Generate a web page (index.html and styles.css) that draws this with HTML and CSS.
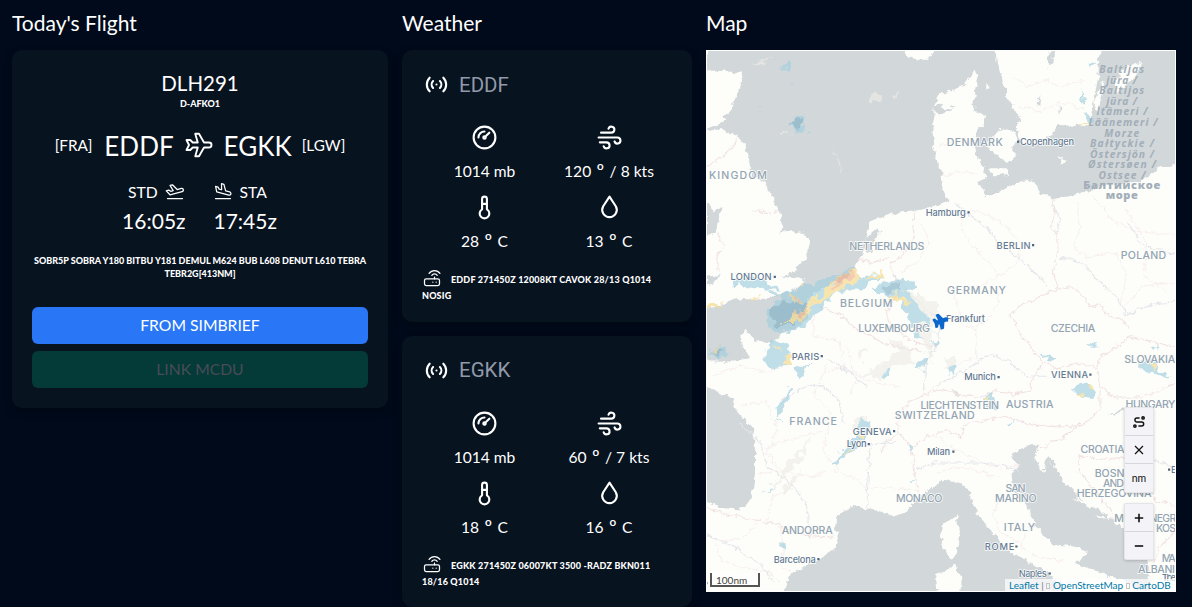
FILE: index.html
```html
<!DOCTYPE html>
<html lang="en">
<head>
<meta charset="utf-8">
<title>Today's Flight</title>
<link rel="stylesheet" href="styles.css">
</head>
<body>
<svg class="sprite" width="0" height="0">
  <symbol id="plane" viewBox="0 0 24 24"><path d="M16 10h4a2 2 0 0 1 0 4h-4l-4 7h-3l2-7h-4l-2 2h-3l2-4l-2-4h3l2 2h4l-2-7h3z"/></symbol>
  <symbol id="depart" viewBox="0 0 24 24"><path d="M14.639 10.258l4.83-1.294a2 2 0 1 1 1.035 3.863l-14.489 3.883l-4.45-5.02l2.897-.776l2.45 1.414l2.897-.776l-3.743-6.244l2.898-.777l5.675 5.727zM3 21h18"/></symbol>
  <symbol id="arrive" viewBox="0 0 24 24"><path d="M15.157 11.81l4.83 1.295a2 2 0 1 1-1.036 3.863l-14.489-3.882l-1.345-6.572l2.898.776l1.414 2.45l2.898.776l-.12-7.279l2.898.777l2.052 7.797zM3 21h18"/></symbol>
  <symbol id="signal" viewBox="0 0 24 24"><path d="M12 12v.01M14.828 9.172a4 4 0 0 1 0 5.656M17.657 6.343a8 8 0 0 1 0 11.314M9.168 14.828a4 4 0 0 1 0-5.656M6.337 17.657a8 8 0 0 1 0-11.314"/></symbol>
  <symbol id="gauge" viewBox="0 0 24 24"><circle cx="12" cy="12" r="9"/><circle cx="12" cy="12" r="1"/><path d="M13.41 10.59l2.59-2.59M7 12a5 5 0 0 1 5-5"/></symbol>
  <symbol id="wind" viewBox="0 0 24 24"><path d="M5 8h8.5a2.5 2.5 0 1 0-2.34-3.24M3 12h15.5a2.5 2.5 0 1 1-2.34 3.24M4 16h5.5a2.5 2.5 0 1 1-2.34 3.24"/></symbol>
  <symbol id="temp" viewBox="0 0 24 24"><path d="M10 13.5a4 4 0 1 0 4 0v-8.5a2 2 0 0 0-4 0v8.5M10 9h4"/></symbol>
  <symbol id="drop" viewBox="0 0 24 24"><path d="M6.8 11a6 6 0 1 0 10.396 0l-5.197-8l-5.2 8z"/></symbol>
  <symbol id="router" viewBox="0 0 24 24"><rect x="3" y="13" width="18" height="8" rx="2"/><path d="M17 17v.01M13 17v.01M15 13v-2M11.75 8.75a4 4 0 0 1 6.5 0M8.5 6.5a8 8 0 0 1 13 0"/></symbol>
  <symbol id="route" viewBox="0 0 24 24"><circle cx="5" cy="19" r="2"/><circle cx="19" cy="5" r="2"/><path d="M11 19h5.5a3.5 3.5 0 0 0 0-7h-8a3.5 3.5 0 0 1 0-7h4.5"/></symbol>
</svg>
<main class="board">
  <section class="col flight-col">
    <h2 class="title">Today's Flight</h2>
    <div class="card flight">
      <div class="callsign">DLH291</div>
      <div class="reg">D-AFKO1</div>
      <div class="legs">
        <span class="iata">[FRA]</span><span class="icao">EDDF</span>
        <svg class="icon thin plane"><use href="#plane"/></svg>
        <span class="icao">EGKK</span><span class="iata">[LGW]</span>
      </div>
      <div class="times">
        <div class="time"><div class="time-head">STD <svg class="icon thin small"><use href="#depart"/></svg></div><div class="clock">16:05z</div></div>
        <div class="time"><div class="time-head"><svg class="icon thin small"><use href="#arrive"/></svg> STA</div><div class="clock">17:45z</div></div>
      </div>
      <p class="route">SOBR5P SOBRA Y180 BITBU Y181 DEMUL M624 BUB L608 DENUT L610 TEBRA<br>TEBR2G[413NM]</p>
      <button class="btn primary">FROM SIMBRIEF</button>
      <button class="btn link" disabled>LINK MCDU</button>
    </div>
  </section>

  <section class="col weather-col">
    <h2 class="title">Weather</h2>
    <div class="card weather">
      <div class="station"><svg class="icon"><use href="#signal"/></svg><span>EDDF</span></div>
      <div class="readings">
        <div class="reading"><svg class="icon"><use href="#gauge"/></svg><span>1014 mb</span></div>
        <div class="reading"><svg class="icon"><use href="#wind"/></svg><span>120 <i class="deg">º</i> / 8 kts</span></div>
        <div class="reading"><svg class="icon"><use href="#temp"/></svg><span>28 <i class="deg">º</i> C</span></div>
        <div class="reading"><svg class="icon"><use href="#drop"/></svg><span>13 <i class="deg">º</i> C</span></div>
      </div>
      <p class="metar"><svg class="icon thin small"><use href="#router"/></svg>EDDF 271450Z 12008KT CAVOK 28/13 Q1014<br>NOSIG</p>
    </div>
    <div class="card weather">
      <div class="station"><svg class="icon"><use href="#signal"/></svg><span>EGKK</span></div>
      <div class="readings">
        <div class="reading"><svg class="icon"><use href="#gauge"/></svg><span>1014 mb</span></div>
        <div class="reading"><svg class="icon"><use href="#wind"/></svg><span>60 <i class="deg">º</i> / 7 kts</span></div>
        <div class="reading"><svg class="icon"><use href="#temp"/></svg><span>18 <i class="deg">º</i> C</span></div>
        <div class="reading"><svg class="icon"><use href="#drop"/></svg><span>16 <i class="deg">º</i> C</span></div>
      </div>
      <p class="metar"><svg class="icon thin small"><use href="#router"/></svg>EGKK 271450Z 06007KT 3500 -RADZ BKN011<br>18/16 Q1014</p>
    </div>
  </section>

  <section class="col map-col">
    <h2 class="title">Map</h2>
    <div class="map">
      <svg class="chart" viewBox="706 50 470 542">
        <defs>
          <filter id="rough" x="-5%" y="-5%" width="110%" height="110%"><feTurbulence type="fractalNoise" baseFrequency=".16" numOctaves="3" seed="4"/><feDisplacementMap in="SourceGraphic" scale="7" xChannelSelector="R" yChannelSelector="G"/></filter>
          <filter id="patchy" x="-5%" y="-5%" width="110%" height="110%"><feTurbulence type="fractalNoise" baseFrequency=".12" numOctaves="2" seed="9"/><feDisplacementMap in="SourceGraphic" scale="13" xChannelSelector="R" yChannelSelector="G"/></filter>
        </defs>
        <rect class="land" x="706" y="50" width="470" height="542"/>
        <g filter="url(#rough)"><g transform="translate(700 40) scale(.33333 .3616)">
          <g class="sea">
            <path d="M36 10L18 48V90L60 86L122 90L128 105L112 150L95 190L70 212L80 222L60 232L18 246V252L65 246L110 265L135 290L150 350L160 375L195 395L210 425L222 435L225 455L237 472L245 495L250 520L232 538L260 528L310 530L330 555L328 590L300 620L280 645L240 655L285 658L315 665L300 680L250 700L210 712L170 718L100 715L60 735L0 748V888L75 890L150 880L130 850L120 815L135 805L150 810L165 830L220 838L240 815L300 790L322 770L318 735L325 712L400 670L440 660L470 620L490 590L500 560L500 530L510 505L550 488L600 478L640 470L700 460L745 448L735 425L722 400L728 370L715 345L700 300L697 240L698 190L720 150L760 140L790 125L825 85L837 92L830 130L820 170L825 200L855 210L850 235L835 250L825 290L832 330L850 350L860 380L830 395L850 410L855 435L890 425L940 400L985 385L1010 400L1020 425L1060 440L1120 430L1200 405L1310 395L1345 378L1378 350L1450 345V10H1200L1195 100L1185 150L1175 200L1170 235L1120 238L1080 235L1060 250L1030 285L980 290L955 270L950 240L960 220L945 200L920 150L905 100L890 60L885 10Z"/>
            <path d="M0 955L55 975L100 995L112 1030L160 1075L165 1130L165 1200L155 1265L135 1290L110 1298L70 1295L0 1275Z"/>
            <path d="M235 1545L275 1475L350 1440L410 1405L415 1380L405 1350L410 1315L460 1285L500 1295L550 1305L580 1318L620 1305L650 1270L690 1240L740 1215L790 1228L810 1255L820 1290L850 1330L880 1365L920 1410L960 1430L1000 1450L1050 1478L1070 1500L1110 1545Z"/>
            <path d="M935 1145L985 1122L1018 1118L1005 1145L1015 1178L1030 1192L1042 1150L1060 1160L1075 1200L1110 1235L1150 1275L1240 1325L1290 1370L1340 1420L1355 1545H1320L1290 1500L1165 1460L1125 1450L1155 1430L1160 1410L1120 1400L1060 1395L1010 1350L985 1290L940 1240L935 1200L955 1180Z"/>
            <path d="M18 445L40 470L65 465L55 500L45 530L18 545ZM18 655L60 650L40 670L18 675ZM1042 35L1062 25L1060 60L1045 75ZM1072 180L1084 190L1076 198ZM1014 165L1020 155L1018 185L1010 180ZM700 175L740 190L765 180L735 205L700 200ZM750 960L785 985L770 982ZM1225 1040L1270 1015L1272 1025ZM500 545L530 520L545 530L520 560L510 590L498 580Z"/>
          </g>
          <g class="isle">
            <path d="M605 20H710L690 48L660 55L620 42ZM785 325L820 305L838 335L815 355L790 340ZM860 290L885 265L905 245L940 252L950 275L935 300L950 320L920 340L885 315ZM870 355L920 355L930 370L880 375ZM1076 320L1100 335L1085 348ZM1190 210L1182 170L1210 115L1216 120ZM1245 110L1278 75L1325 60L1310 95L1275 130L1255 150ZM855 120L875 128L860 137ZM725 1340L755 1330L770 1310L778 1370L770 1415L755 1440L728 1405L722 1365ZM705 1475L740 1465L765 1450L785 1490L780 1545H710ZM1045 1165L1090 1190L1070 1185ZM1070 1190L1110 1215L1130 1210L1100 1235ZM1120 1270L1180 1280L1215 1305L1160 1290ZM1180 1310L1240 1325L1200 1322Z"/>
          </g>
          <g class="border">
            <path d="M18 350L60 330L100 295L110 270M50 530L70 570L50 600L55 640M160 470L200 480L235 475M645 470L640 500L645 540L600 600L570 620L580 650M470 610L520 615L570 600M580 650L600 690L560 750L570 800L620 820L660 840L710 850M325 712L370 740L420 760L470 800L560 840L600 850L660 860M1060 440L1065 480L1055 510L1070 540L1075 580L1060 640L1075 690M1075 690L1040 700L1000 720L950 740L930 760L960 810L1000 860L1030 890M1075 690L1110 680L1150 710L1170 740L1200 730L1220 760L1260 770L1290 800M1030 890L1070 910L1120 895L1190 905L1200 880L1230 860L1290 820L1340 830L1427 850M1190 910L1200 960L1250 990L1320 990L1400 960L1427 950M1030 890L1000 930L990 970L940 980L890 970L840 985L780 980L720 965L670 980M670 980L630 1000L600 1030L590 1080L620 1110L640 1150L640 1200L660 1250M590 1090L560 1110L540 1140M640 1120L700 1090L740 1080L780 1100L800 1060L860 1050L910 1040L1000 1065L1080 1070L1150 1065L1200 1020L1200 970M18 1295L80 1310L170 1330L240 1340L320 1370L400 1375M1020 1130L1050 1110L1090 1100L1140 1060M1140 1150L1200 1160L1260 1155L1340 1180M1140 1150L1135 1190L1190 1250L1240 1310M1340 1180L1360 1270L1427 1290M1427 1360L1380 1400L1360 1450"/>
            <path class="faint" d="M940 100L980 130L1030 110L1090 130L1150 110M960 180L1020 200L1080 170L1150 190M720 290L770 280L830 280M720 380L770 365L830 370M760 450L800 470L860 480L920 520L960 560L950 620L880 660L780 700M660 500L690 560L650 620L600 640M780 480L790 540L850 600L900 650M900 700L880 760L830 790L830 880L760 900M760 700L790 790L830 800M1130 450L1140 520L1120 570L1160 600L1250 590L1280 650L1260 730M1280 470L1340 560L1330 650L1400 700M1180 430L1240 500L1310 530L1427 540M1270 740L1330 680L1427 670M340 750L340 820L420 830L430 900L380 920M380 900L340 980L390 1030L380 1080L370 1140L420 1190M420 900L500 940L600 960M40 930L120 900L200 920L250 900M120 1010L200 1000L230 1080L200 1140L250 1200M210 1120L290 1100L370 1080M180 1200L250 1190L340 1210L380 1190M280 1240L220 1260L200 1340M400 1190L460 1210L500 1240L600 1240L660 1250M440 850L470 940L450 980M700 1090L760 1130L880 1180L960 1180M700 1200L780 1180L900 1210M900 1260L880 1310L900 1360L960 1390M1000 1330L960 1400L1010 1430L1090 1440M18 1370L80 1390L140 1370L170 1335M50 1390L60 1440L140 1460L200 1470M200 1470L240 1500M240 1340L250 1400L240 1450L280 1480"/>
          </g>
          <g class="river"><path d="M760 450L860 520L900 560L960 610L1000 640L1045 680M1060 460L1080 500L1065 540M1080 600L1150 620L1200 670L1250 710L1280 760L1330 740L1427 720M670 970L680 890L715 840L720 780L650 720L580 650M700 960L780 920L870 870L930 890L980 930L1040 930M240 1000L310 960L360 950L420 1000L430 1060M120 1060L180 1110L200 1180L280 1230L320 1290L330 1380M380 880L450 920L500 960M500 1290L505 1200L510 1120L590 1110M18 1370L100 1400L180 1450L220 1500M640 1190L700 1170L850 1170L960 1190M1320 1090L1350 1160L1427 1180M1280 500L1330 570L1427 590"/></g>
        </g></g>
        <g filter="url(#patchy)" class="rain"><g transform="translate(700 40) scale(.33333 .3616)">
          <path class="haze" d="M595 690L650 700L720 740L700 790L690 860L700 900L660 820L640 770ZM490 930L560 880L600 860L560 830L600 830L640 870L640 890L580 900L540 935ZM730 880L765 880L770 920L740 910ZM475 860L510 850L480 890ZM205 1250L270 1170L335 1095L300 1160L230 1230L195 1260ZM240 1240L310 1190L260 1250ZM520 145L545 160L530 170L510 165ZM565 150L600 140L580 158ZM165 60L210 50L180 70ZM390 290L430 365L410 340ZM455 1050L500 1040L520 1080L470 1100ZM240 250L275 258L250 260Z"/>
          <path class="blue" d="M265 232L285 215L312 206L305 245L293 262L280 240ZM315 255L337 256L330 261ZM240 75L275 65L265 85ZM270 118L285 118L275 128ZM173 175L188 172L180 181ZM90 685L105 665L150 655L210 670L240 690L190 690L130 675ZM200 745L230 720L260 700L300 685L350 670L400 655L460 635L480 655L550 645L500 680L410 700L370 730L340 770L310 790L260 810L210 800ZM200 690L235 700L220 710ZM205 835L240 830L265 860L275 890L230 910L190 885L200 860ZM30 860L75 850L90 870L60 880L25 875ZM515 690L560 660L640 665L655 685L610 690L640 720L690 770L680 790L650 780L670 830L650 820L620 760L600 720L560 710ZM690 835L720 828L715 845ZM650 890L680 880L670 915L640 905ZM555 905L575 910L560 935L550 925ZM745 905L770 900L765 925L745 925ZM290 905L325 895L320 925L295 945ZM225 1010L250 1000L265 960L275 960L260 1010L240 1030L240 1060ZM400 1165L450 1110L485 1050L515 1055L495 1100L450 1145L405 1170ZM188 1262L225 1225L210 1245ZM1115 965L1150 950L1190 970L1180 990L1140 985ZM1020 868L1070 875L1040 882ZM1160 840L1200 845L1185 855ZM1310 895L1360 885L1380 910L1420 940L1370 925L1330 915ZM1350 852L1375 850L1370 860ZM850 985L880 975L895 1010L880 1025L850 1005ZM920 1065L950 1050L940 1065ZM1145 135L1152 165L1140 170ZM1145 180L1160 195L1145 190ZM1160 205L1175 215L1170 235L1150 235ZM1155 60L1185 58L1170 72ZM230 1395L260 1395L240 1410ZM625 1120L640 1130L630 1140ZM640 1215L655 1215L640 1220ZM620 1252L635 1245L625 1255Z"/>
          <path class="deep" d="M210 740L250 720L310 730L320 770L260 790L225 790ZM270 228L308 212L300 245ZM35 860L75 858L60 875ZM550 680L600 670L600 690L560 700Z"/>
          <path class="yellow" d="M365 705L385 680L420 655L475 638L478 665L430 685L400 705L340 735L320 760L310 780L260 780L290 755L325 725ZM485 660L550 642L550 650L510 660ZM18 728L75 725L50 738L18 745ZM270 700L300 720L285 730ZM560 710L580 700L635 725L615 728ZM150 715L180 705L170 718ZM250 880L275 868L272 895L255 892ZM225 850L240 850L238 865ZM35 860L60 855L55 868ZM300 685L320 680L315 692ZM235 780L260 780L245 785ZM470 1095L495 1085L485 1105ZM430 1145L455 1130L435 1150ZM1125 980L1155 975L1150 987ZM1155 955L1175 955L1165 965ZM1350 900L1370 900L1365 920ZM850 990L870 985L865 1000ZM1140 230L1160 228L1155 238ZM232 1398L242 1396L238 1405Z"/>
          <path class="orange" d="M390 690L405 668L440 648L475 645L440 665L410 680ZM285 760L318 735L310 770L295 775ZM275 707L298 720L290 724Z"/>
        </g></g>
        <g class="country">
          <text x="709" y="179" textLength="58">KINGDOM</text>
          <text x="946.7" y="145.5" textLength="56">DENMARK</text>
          <text x="849.3" y="249.5" textLength="75">NETHERLANDS</text>
          <text x="1120.7" y="259" textLength="45.5">POLAND</text>
          <text x="947" y="294" textLength="59">GERMANY</text>
          <text x="840" y="307" textLength="52.5">BELGIUM</text>
          <text x="858.3" y="331.7" textLength="71.7">LUXEMBOURG</text>
          <text x="1050.7" y="331.7" textLength="44.5">CZECHIA</text>
          <text x="1124.3" y="363.3" textLength="51">SLOVAKIA</text>
          <text x="920.5" y="409" textLength="78.5">LIECHTENSTEIN</text>
          <text x="1006" y="407.7" textLength="47.5">AUSTRIA</text>
          <text x="1125.5" y="408.2" textLength="50">HUNGARY</text>
          <text x="894.7" y="419" textLength="80">SWITZERLAND</text>
          <text x="789.3" y="424.5" textLength="47.5">FRANCE</text>
          <text x="1080.5" y="453" textLength="44">CROATIA</text>
          <text x="1094.7" y="477.3" textLength="40">BOSNIA</text>
          <text x="1103" y="487" textLength="21">AND</text>
          <text x="1076.7" y="496.5" textLength="74.7">HERZEGOVINA</text>
          <text x="1005.5" y="492" textLength="20">SAN</text>
          <text x="995" y="501.5" textLength="41.7">MARINO</text>
          <text x="896" y="502.3" textLength="46.3">MONACO</text>
          <text x="1114.3" y="522" textLength="62">MONTENEGR</text>
          <text x="1156" y="532.2" textLength="20">KOS</text>
          <text x="1003.7" y="530.6" textLength="31.5">ITALY</text>
          <text x="781.7" y="533.8" textLength="51">ANDORRA</text>
          <text x="1161.7" y="562.3" textLength="14">MA</text>
          <text x="1138" y="572.5" textLength="37">ALBANI</text>
        </g>
        <g class="city">
          <text x="1020" y="145" textLength="54">Copenhagen</text><text x="925.7" y="215.7" textLength="40">Hamburg</text>
          <text x="996.5" y="248.5" textLength="34">BERLIN</text><text x="730.5" y="280.3" textLength="41">LONDON</text>
          <text x="946" y="322.3" textLength="39">Frankfurt</text><text x="791.7" y="359.6" textLength="27.5">PARIS</text>
          <text x="964.3" y="380.3" textLength="31.5">Munich</text><text x="1051" y="378" textLength="37">VIENNA</text>
          <text x="852.7" y="435.2" textLength="39">GENEVA</text><text x="846.7" y="447" textLength="20">Lyon</text>
          <text x="927" y="454.7" textLength="23">Milan</text><text x="984.7" y="549.8" textLength="29.7">ROME</text>
          <text x="773.7" y="562.5" textLength="42">Barcelona</text><text x="1018.7" y="576.8" textLength="28">Naples</text>
          <text x="1171" y="473">B</text><text x="1162" y="581" textLength="14">The</text>
        </g>
        <path class="dots" d="M1017 140.5h2.2v2.2h-2.2zM967.5 211.2h2.2v2.2h-2.2zM1032 244h2.2v2.2h-2.2zM773.7 275.8h2.2v2.2h-2.2zM820.7 355h2.2v2.2h-2.2zM997.5 376h2.2v2.2h-2.2zM1089.3 373.5h2.2v2.2h-2.2zM893 430h2.2v2.2h-2.2zM867.7 443h2.2v2.2h-2.2zM952.3 450.5h2.2v2.2h-2.2zM1015.3 545.4h2.2v2.2h-2.2zM817.3 558h2.2v2.2h-2.2zM1048.7 572.4h2.2v2.2h-2.2zM1168 468.5h2.2v2.2h-2.2zM706 582h1.5v2.2h-1.5z"/>
        <g class="baltic">
          <text x="1121.7" y="73" textLength="45">Baltijas</text><text x="1121.7" y="83.6" textLength="31">jūra /</text>
          <text x="1121.7" y="94.2" textLength="45">Baltijos</text><text x="1121.7" y="104.8" textLength="31">jūra /</text>
          <text x="1122" y="115.4" textLength="51">Itämeri /</text><text x="1123" y="126" textLength="69">Läänemeri /</text>
          <text x="1121.7" y="136.6" textLength="35">Morze</text><text x="1122" y="147.2" textLength="64">Bałtyckie /</text>
          <text x="1122" y="157.8" textLength="64">Östersjön /</text><text x="1122" y="168.4" textLength="68">Østersøen /</text>
          <text x="1122" y="179" textLength="47">Ostsee /</text>
          <text class="ru" x="1121.7" y="189" textLength="77">Балтийское</text><text class="ru" x="1121.7" y="199.4" textLength="32">море</text>
        </g>
        <path class="jet" transform="translate(940.8 321.3) rotate(70)" d="M0-7C.9-7 1.4-6.2 1.4-5V-2.6L7.3 0V2L1.4 1.4V3.6L4 5V6.5L0 5.8L-4 6.5V5L-1.4 3.6V1.4L-7.3 2V0L-1.4-2.6V-5C-1.4-6.2-.9-7 0-7Z"/>
      </svg>
      <div class="controls">
        <div class="bar"><span><svg class="tool route-tool"><use href="#route"/></svg></span><span><svg class="tool" viewBox="0 0 14 14"><path d="M3 3l8 8M11 3l-8 8"/></svg></span><span class="unit">nm</span></div>
        <div class="bar"><span><svg class="tool zoomer" viewBox="0 0 14 14"><path d="M7 2.8v8.4M2.8 7h8.4"/></svg></span><span><svg class="tool zoomer" viewBox="0 0 14 14"><path d="M2.8 7h8.4"/></svg></span></div>
      </div>
      <div class="scale">100nm</div>
      <div class="credit"><a>Leaflet</a> | <i></i> <a>OpenStreetMap</a> <i></i> <a>CartoDB</a></div>
    </div>
  </section>
</main>
</body>
</html>
```
FILE: styles.css
```css
* { box-sizing: border-box; }
body { margin: 0; height: 607px; overflow: hidden; background: #000a1a; color: #fff; font-family: Lato, sans-serif; }
.sprite { position: absolute; }
.board { display: grid; grid-template-columns: 376px 290px 470px; gap: 14px; padding: 0 12px; }
.title { margin: 0; height: 50px; padding-top: 9px; font-size: 21px; line-height: 27px; font-weight: 400; }
.card { background: #07131f; border-radius: 10px; padding: 20px; box-shadow: 0 4px 10px rgba(0, 0, 0, .25); }
.icon { width: 29px; height: 29px; fill: none; stroke: currentColor; stroke-width: 1.75; stroke-linecap: round; stroke-linejoin: round; display: block; }
.thin { stroke-width: 1.5; }
.small { width: 20px; height: 20px; }

.flight { height: 357.5px; display: flex; flex-direction: column; text-align: center; }
.callsign { height: 25px; font-size: 20.5px; line-height: 25px; margin-top: 1px; }
.reg { height: 13px; font-size: 9px; line-height: 13px; font-weight: 900; margin-top: 1px; }
.legs { display: flex; justify-content: center; align-items: center; height: 36px; margin-top: 18px; gap: 12px; }
.icao { font-size: 26px; }
.iata { font-size: 15.3px; line-height: 20px; margin-top: -2px; }
.iata:last-child { margin-left: -2px; }
.plane { width: 30px; height: 30px; margin: -2px -2px 0; }
.times { display: flex; justify-content: center; gap: 27px; margin-top: 18px; }
.time-head { display: flex; justify-content: center; align-items: center; gap: 7px; height: 20px; font-size: 15.7px; }
.time:first-child .time-head { padding-left: 5px; }
.time:last-child .time-head { padding-right: 11px; }
.time-head .icon { margin-top: -3px; }
.clock { font-size: 21px; line-height: 28px; margin-top: 5px; }
.route { margin: 20px -10px 27px; font-size: 9px; line-height: 12.5px; font-weight: 900; white-space: nowrap; }
.btn { height: 37px; flex: none; border: 0; border-radius: 6px; font: 400 15.7px/36px Lato, sans-serif; color: #fff; padding: 0 0 1px; }
.primary { background: #2977f6; }
.link { margin-top: 6.5px; background: #043a37; color: #494c57; }

.weather { height: 271.5px; }
.weather + .weather { margin-top: 14px; }
.station { display: flex; align-items: center; gap: 8px; height: 29px; font: 400 20.5px Roboto, sans-serif; color: #9299aa; }
.station .icon { color: #fff; }
.readings { display: grid; grid-template-columns: 1fr 1fr; margin-top: 24px; row-gap: 4px; }
.reading { display: flex; flex-direction: column; align-items: center; height: 66px; font-size: 15.6px; line-height: 20px; gap: 9px; white-space: nowrap; }
.reading:nth-child(even) { margin-left: -1px; }
.deg { display: inline-block; font-style: normal; font-size: 19px; line-height: 14px; margin: 0 1.4px; vertical-align: -1px; }
.metar { margin: 13px 0 0; font-size: 9px; line-height: 15px; font-weight: 900; letter-spacing: .18px; white-space: nowrap; }
.metar .icon { display: inline-block; vertical-align: -5px; margin: -8px 9px 0 0; }

.map { position: relative; height: 542px; overflow: hidden; border: 1px solid #fff; }
.chart { display: block; width: 470px; height: 542px; margin: -1px; }
.land, .isle { fill: #fdfdfa; }
.sea { fill: #d2d7da; }
.border { fill: none; stroke: #f1e2e3; stroke-width: 3; }
.faint { stroke: #f6eded; stroke-width: 2.5; }
.river { fill: none; stroke: #e3e5ea; stroke-width: 3; }
.rain { opacity: .65; }
.haze { fill: #eeede7; }
.blue { fill: #a0cfdf; }
.deep { fill: #7fb0c5; }
.yellow { fill: #f5d98a; }
.orange { fill: #efb08c; }
.country, .city { font-family: Inter, sans-serif; font-size: 10.6px; font-weight: 500; fill: #93a4b2; paint-order: stroke; stroke: #fdfdfa; stroke-width: 1.4px; }
.city { font-size: 9.3px; fill: #647a94; }
.dots { fill: #50667f; }
.baltic { font: italic 700 10.3px "Open Sans", sans-serif; fill: #a2aeb8; text-anchor: middle; }
.baltic .ru { font-style: normal; font-weight: 800; font-size: 11px; }
.jet { fill: #0b67cc; stroke: #0b67cc; stroke-width: 1.5; stroke-linejoin: round; }
.controls { position: absolute; left: 417px; top: 356px; display: flex; flex-direction: column; gap: 10px; }
.bar { width: 30px; border: 1px solid #e3e5e9; background: #f4f4f8; border-radius: 2px; box-shadow: 0 1px 3px rgba(0, 0, 0, .18); }
.bar span { display: flex; height: 28px; align-items: center; justify-content: center; color: #111; }
.bar span:first-child { height: 27px; }
.bar span + span { border-top: 1px solid #d5d7dc; }
.tool { width: 14px; height: 14px; fill: none; stroke: #111; stroke-width: 1.2; }
.route-tool { stroke-width: 2.5; }
.zoomer { stroke-width: 1.6; }
.bar .unit { font-size: 10.5px; height: 29px; }
.scale { position: absolute; left: 3px; bottom: 4px; width: 50px; height: 14px; border: 2px solid #555; border-top: 0; background: rgba(255, 255, 255, .6); color: #444; font-size: 10px; line-height: 14px; padding-left: 4px; }
.credit { position: absolute; right: 0; bottom: 0; width: 170px; height: 12px; background: rgba(255, 255, 255, .7); color: #777; font-size: 10px; line-height: 12px; white-space: nowrap; padding-left: 4px; }
.credit a { color: #0078a8; }
.credit i { display: inline-block; width: 4px; height: 6px; border: 1px solid #c4c4c4; }
```
